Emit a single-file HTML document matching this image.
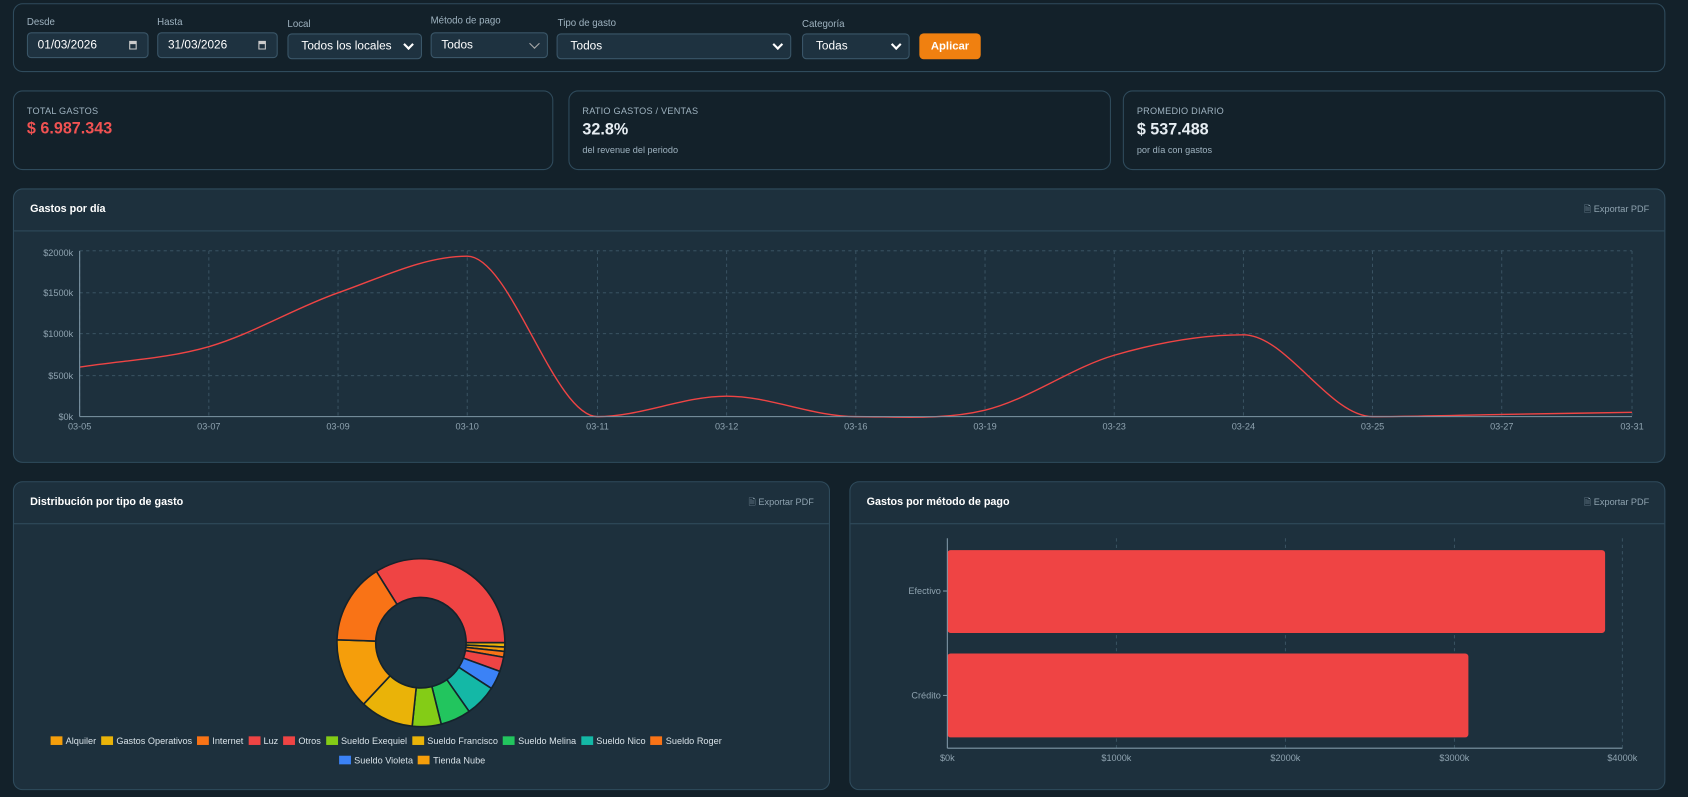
<!DOCTYPE html>
<html><head><meta charset="utf-8"><style>
*{box-sizing:border-box;margin:0;padding:0}
html,body{width:1688px;height:796px;overflow:hidden;background:#13212a;font-family:"Liberation Sans",sans-serif;color:#e6edf2}
#root{position:absolute;left:0;top:0;width:1568px;height:740px;transform:scale(1.07653);transform-origin:0 0}
.abs{position:absolute}
.panel{position:absolute;border:1px solid #2f4b5c;border-radius:9px}
.dark{background:#13212a}
.mid{background:#1d303d}
.lbl{position:absolute;font-size:9px;color:#9fb3c0}
.ctl{position:absolute;height:24px;border:1px solid #3a5668;border-radius:4px;background:#1e3240;font-size:11px;color:#fff;padding:6px 9px;line-height:11px}
.chev{position:absolute;right:8px;top:6px;width:7px;height:7px;border-right:2px solid #fff;border-bottom:2px solid #fff;transform:rotate(45deg)}
.cal{position:absolute;right:10px;top:7px;width:7px;height:8px;border:1.5px solid #ccc;border-top-width:3px}
.st{font-size:8.5px;color:#9fb3c0;position:absolute;left:12px;top:13px;letter-spacing:.2px}
.sv{font-size:15px;font-weight:bold;position:absolute;left:12px;top:27px}
.ss{font-size:8.5px;color:#9fb3c0;position:absolute;left:12px;top:49px}
.ttl{position:absolute;left:15px;top:13px;font-size:10px;font-weight:bold;color:#fff}
.exp{position:absolute;right:14px;top:13px;font-size:8.5px;color:#8fa3b0}
.hl{position:absolute;left:0;right:0;border-top:1px solid #2f4b5c}
.leg{position:absolute;font-size:8.5px;color:#d8e2e8;white-space:nowrap}
.leg span{display:inline-block;width:11px;height:8px;margin:0 3px 0 0;vertical-align:-1px}
</style></head><body><div id="root">
<div class="panel dark" style="left:12px;top:3px;width:1535px;height:64px"></div>
<div class="lbl" style="left:25px;top:15px">Desde</div>
<div class="ctl" style="left:25px;top:30px;width:113px">01/03/2026<div class="cal"></div></div>
<div class="lbl" style="left:146px;top:15px">Hasta</div>
<div class="ctl" style="left:146px;top:30px;width:112px">31/03/2026<div class="cal"></div></div>
<div class="lbl" style="left:267px;top:17px">Local</div>
<div class="ctl" style="left:267px;top:31px;width:125px;padding-left:12px">Todos los locales<div class="chev"></div></div>
<div class="lbl" style="left:400px;top:14px">Método de pago</div>
<div class="ctl" style="left:400px;top:30px;width:109px">Todos<div class="chev" style="border-width:1px;border-color:#aaa"></div></div>
<div class="lbl" style="left:518px;top:16px">Tipo de gasto</div>
<div class="ctl" style="left:517px;top:31px;width:218px;padding-left:12px">Todos<div class="chev"></div></div>
<div class="lbl" style="left:745px;top:17px">Categoría</div>
<div class="ctl" style="left:745px;top:31px;width:100px;padding-left:12px">Todas<div class="chev"></div></div>
<div class="abs" style="left:854px;top:31px;width:57px;height:24px;background:#f08010;border-radius:4px;font-size:10.5px;font-weight:bold;color:#fff;text-align:center;line-height:24px">Aplicar</div>

<div class="panel dark" style="left:12px;top:84px;width:502px;height:74px"><div class="st">TOTAL GASTOS</div><div class="sv" style="color:#f05252;top:26px">$ 6.987.343</div></div>
<div class="panel dark" style="left:528px;top:84px;width:504px;height:74px"><div class="st">RATIO GASTOS / VENTAS</div><div class="sv">32.8%</div><div class="ss">del revenue del periodo</div></div>
<div class="panel dark" style="left:1043px;top:84px;width:504px;height:74px"><div class="st">PROMEDIO DIARIO</div><div class="sv">$ 537.488</div><div class="ss">por día con gastos</div></div>

<div class="panel mid" style="left:12px;top:175px;width:1535px;height:255px"><div class="ttl" style="top:13px">Gastos por día</div><div class="exp">🗎 Exportar PDF</div><div class="hl" style="top:38px"></div></div>
<div class="panel mid" style="left:12px;top:447px;width:759px;height:287px"><div class="ttl">Distribución por tipo de gasto</div><div class="exp">🗎 Exportar PDF</div><div class="hl" style="top:38px"></div></div>
<div class="panel mid" style="left:789px;top:447px;width:758px;height:287px"><div class="ttl">Gastos por método de pago</div><div class="exp">🗎 Exportar PDF</div><div class="hl" style="top:38px"></div></div>

<svg class="abs" style="left:0;top:0" width="1568" height="740" font-family="Liberation Sans" font-size="8.5" fill="#8fa3b0">
<g id="g1" stroke="#3e5868" stroke-dasharray="3,3" stroke-width="0.8"></g>
<path id="ln" fill="none" stroke="#ef4444" stroke-width="1.3"/>
<g id="dn" stroke="#15232c" stroke-width="1.5"></g>
<g stroke="#3e5868" stroke-dasharray="3,3" stroke-width="0.8">
<line x1="1037" y1="500" x2="1037" y2="695"/><line x1="1194" y1="500" x2="1194" y2="695"/><line x1="1351" y1="500" x2="1351" y2="695"/><line x1="1507" y1="500" x2="1507" y2="695"/>
</g>
<rect x="880" y="511" width="611" height="77" rx="3" fill="#ef4444"/>
<rect x="880" y="607" width="484" height="78" rx="3" fill="#ef4444"/>
<line x1="880" y1="500" x2="880" y2="695" stroke="#7f97a6"/><line x1="880" y1="695" x2="1507" y2="695" stroke="#7f97a6"/>
<line x1="876" y1="549" x2="880" y2="549" stroke="#7f97a6"/><line x1="876" y1="646" x2="880" y2="646" stroke="#7f97a6"/>
<text x="874" y="552" text-anchor="end">Efectivo</text><text x="874" y="649" text-anchor="end">Crédito</text>
<g text-anchor="middle"><text x="880" y="707">$0k</text><text x="1037" y="707">$1000k</text><text x="1194" y="707">$2000k</text><text x="1351" y="707">$3000k</text><text x="1507" y="707">$4000k</text></g>
<g text-anchor="end"><text x="68" y="238">$2000k</text><text x="68" y="275">$1500k</text><text x="68" y="313">$1000k</text><text x="68" y="352">$500k</text><text x="68" y="390">$0k</text></g>
<g id="xl" text-anchor="middle"></g>
<line x1="74" y1="233" x2="74" y2="387" stroke="#7f97a6"/><line x1="74" y1="387" x2="1516" y2="387" stroke="#7f97a6"/>
</svg>
<div class="leg" style="left:47px;top:683px"><span style="background:#f59e0b"></span>Alquiler &nbsp;<span style="background:#eab308"></span>Gastos Operativos &nbsp;<span style="background:#f97316"></span>Internet &nbsp;<span style="background:#ef4444"></span>Luz &nbsp;<span style="background:#ef4444"></span>Otros &nbsp;<span style="background:#84cc16"></span>Sueldo Exequiel &nbsp;<span style="background:#eab308"></span>Sueldo Francisco &nbsp;<span style="background:#22c55e"></span>Sueldo Melina &nbsp;<span style="background:#14b8a6"></span>Sueldo Nico &nbsp;<span style="background:#f97316"></span>Sueldo Roger</div>
<div class="leg" style="left:315px;top:701px"><span style="background:#3b82f6"></span>Sueldo Violeta &nbsp;<span style="background:#f59e0b"></span>Tienda Nube</div>
</div>
<script>
var NS="http://www.w3.org/2000/svg";
function el(t,a,p){var e=document.createElementNS(NS,t);for(var k in a)e.setAttribute(k,a[k]);p.appendChild(e);return e}
var xs=[74,194,314,434,555,675,795,915,1035,1155,1275,1395,1516];
var ys=[341,322,272,238,387,368,387,381,330,311,387,385,383];
var lb=["03-05","03-07","03-09","03-10","03-11","03-12","03-16","03-19","03-23","03-24","03-25","03-27","03-31"];
var g1=document.getElementById("g1"),xl=document.getElementById("xl");
xs.forEach(function(x,i){el("line",{x1:x,y1:233,x2:x,y2:387},g1);var t=el("text",{x:x,y:399},xl);t.textContent=lb[i]});
[233,272,310,349].forEach(function(y){el("line",{x1:74,y1:y,x2:1516,y2:y},g1)});
var n=xs.length,d=[],m=[];
for(var i=0;i<n-1;i++)d.push((ys[i+1]-ys[i])/(xs[i+1]-xs[i]));
m[0]=d[0];m[n-1]=d[n-2];
for(i=1;i<n-1;i++){m[i]=(d[i-1]*d[i]<=0)?0:(d[i-1]+d[i])/2;}
var p="M"+xs[0]+","+ys[0];
for(i=0;i<n-1;i++){var h=(xs[i+1]-xs[i])/3;p+="C"+(xs[i]+h)+","+(ys[i]+m[i]*h)+" "+(xs[i+1]-h)+","+(ys[i+1]-m[i+1]*h)+" "+xs[i+1]+","+ys[i+1];}
document.getElementById("ln").setAttribute("d",p);
var segs=[[-32,90,"#ef4444"],[90,93,"#eab308"],[93,96,"#f59e0b"],[96,100,"#f97316"],[100,110,"#ef4444"],[110,123,"#3b82f6"],[123,145,"#14b8a6"],[145,166,"#22c55e"],[166,186,"#84cc16"],[186,223,"#eab308"],[223,272,"#f59e0b"],[272,328,"#f97316"]];
var cx=391,cy=597,R=78,r=42,dn=document.getElementById("dn");
function pt(a,rr){var t=(a-90)*Math.PI/180;return (cx+rr*Math.cos(t)).toFixed(2)+","+(cy+rr*Math.sin(t)).toFixed(2)}
segs.forEach(function(s){var lg=(s[1]-s[0])>180?1:0;
el("path",{d:"M"+pt(s[0],R)+"A"+R+","+R+" 0 "+lg+" 1 "+pt(s[1],R)+"L"+pt(s[1],r)+"A"+r+","+r+" 0 "+lg+" 0 "+pt(s[0],r)+"Z",fill:s[2]},dn)});
</script>
</body></html>
